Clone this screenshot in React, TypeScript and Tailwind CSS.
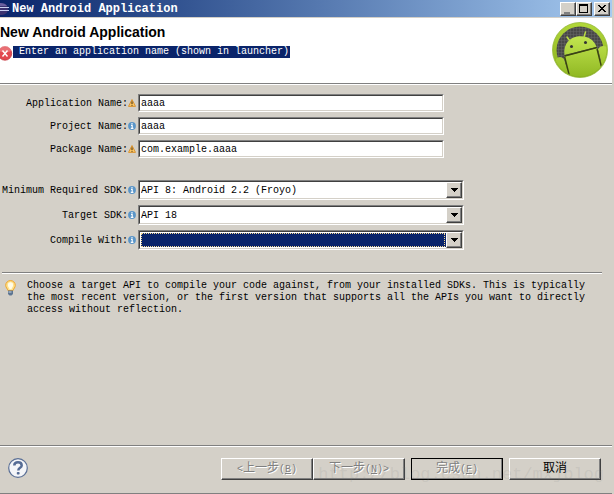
import { useState } from 'react';
import type { ReactNode } from 'react';

const sunken =
  'border border-t-[#808080] border-l-[#808080] border-b-white border-r-white';
const sunkenInner =
  'border border-t-[#404040] border-l-[#404040] border-b-[#d4d0c8] border-r-[#d4d0c8]';
const raised =
  'border border-t-white border-l-white border-b-[#404040] border-r-[#404040] shadow-[inset_-1px_-1px_0_#808080]';

function EclipseIcon() {
  return (
    <svg viewBox="0 0 9 14" className="w-[9px] h-[14px] shrink-0" aria-hidden="true">
      <path d="M0 1c5 0 8 2 8 6s-3 6-8 6z" fill="#3b3270" />
      <path d="M0 1c3 0 6 1 7 3H0z" fill="#6a5fa0" />
      <path d="M0 5.5h9M0 8.5h9" stroke="#c9cff0" />
    </svg>
  );
}

function ErrorIcon() {
  return (
    <svg viewBox="0 0 13 15" className="w-[13px] h-[15px] shrink-0" aria-hidden="true">
      <circle cx="5" cy="7.5" r="6.7" fill="#e2474f" stroke="#c33a42" strokeWidth=".8" />
      <path d="M-1 5a6 5 0 0 1 12 0q-6 3-12 0z" fill="#f08a8e" opacity=".6" />
      <path d="M2.5 4.5l5 6M7.5 4.5l-5 6" stroke="#fff" strokeWidth="1.4" />
    </svg>
  );
}

function WarningIcon() {
  return (
    <svg viewBox="0 0 8 8" className="w-2 h-2" aria-hidden="true">
      <path d="M4 .5L7.5 7.4H.5z" fill="#fbc665" stroke="#d99536" strokeWidth="1" strokeLinejoin="round" />
      <path d="M4 2.4v2.6M4 5.8v1" stroke="#3d2608" strokeWidth="1" />
    </svg>
  );
}

function InfoIcon() {
  return (
    <svg viewBox="0 0 8 8" className="w-2 h-2" aria-hidden="true">
      <circle cx="4" cy="4" r="3.9" fill="#5a95c8" />
      <path d="M4 1v1.2M3 3.4h1.2v3M2.8 6.4h2.6" stroke="#fff" strokeWidth="1.1" fill="none" />
    </svg>
  );
}

function BulbIcon() {
  return (
    <svg viewBox="0 0 11 16" className="w-[11px] h-4" aria-hidden="true">
      <path d="M5.5.6a4.7 4.7 0 0 0-4.8 4.7c0 2.2 1.7 3.2 2.2 5.2h5.2c.5-2 2.2-3 2.2-5.2A4.7 4.7 0 0 0 5.5.6z" fill="#fde08a" stroke="#f0a52c" />
      <path d="M5.5 2.2a2.8 2.8 0 0 0-2.6 3c0 1.5 1.2 2.3 1.6 4h2c.4-1.7 1.6-2.5 1.6-4a2.8 2.8 0 0 0-2.600-3z" fill="#fffbe6" />
      <path d="M3 10.5h5V14l-1.5 1.500h-2L3 14z" fill="#5d7591" />
      <path d="M3.500 12h3" stroke="#c9d6e2" />
    </svg>
  );
}

function HelpIcon() {
  return (
    <svg viewBox="0 0 20 20" className="w-5 h-5" aria-hidden="true">
      <circle cx="10" cy="10" r="9.3" fill="#f4f5f8" stroke="#5a6f96" strokeWidth="1.2" />
      <path d="M6.300 7.600C6.300 5.400 7.900 4.300 10 4.300s3.700 1.200 3.700 3.100c0 2.500-3.400 2.400-3.400 5" fill="none" stroke="#566c95" strokeWidth="2.500" />
      <rect x="8.800" y="14" width="2.800" height="2.600" rx=".8" fill="#566c95" />
    </svg>
  );
}

function AndroidLogo() {
  return (
    <svg viewBox="0 0 56 56" className="w-14 h-14" aria-hidden="true">
      <defs>
        <linearGradient id="ring" x1="0" y1="0" x2="0" y2="1">
          <stop offset="0" stopColor="#b2d83a" />
          <stop offset="1" stopColor="#86ac1c" />
        </linearGradient>
        <linearGradient id="body" gradientUnits="userSpaceOnUse" x1="0" y1="14" x2="0" y2="56">
          <stop offset="0" stopColor="#c3e650" />
          <stop offset="1" stopColor="#8fb722" />
        </linearGradient>
        <pattern id="mesh" width="3" height="3" patternUnits="userSpaceOnUse">
          <rect width="3" height="3" fill="#484848" />
          <path d="M0 0h3M0 0v3" stroke="#666" />
        </pattern>
        <clipPath id="disc">
          <circle cx="28" cy="28" r="26.5" />
        </clipPath>
      </defs>
      <circle cx="28" cy="28" r="27.5" fill="url(#ring)" stroke="#94b83a" strokeWidth=".8" />
      <circle cx="28" cy="28" r="23.5" fill="url(#mesh)" />
      <g clipPath="url(#disc)">
        <path d="M12.500 33C11 22 18 15.500 25 14.500c9-1.500 17 2.500 19.500 10.500z" fill="url(#body)" />
        <path d="M12.500 34.500L45 26l8 30H17z" fill="url(#body)" />
        <path d="M4 37q4-4 8 0l6 20H4zM46 27q3-5 9-2v26l-4-4z" fill="url(#body)" />
        <path d="M12.500 34L45 25.500M12.700 35l4.500 18M45 27l4.500 18" fill="none" stroke="#3a4410" strokeWidth="1.400" />
        <path d="M18 19l-3-4M32 15l1.500-5" stroke="#b9dc43" strokeWidth="1.500" strokeLinecap="round" />
        <circle cx="19.500" cy="24.500" r="1.500" fill="#333" />
        <circle cx="33.500" cy="20.500" r="1.500" fill="#333" />
      </g>
    </svg>
  );
}

function CaptionButton({ label, children }: { label: string; children: ReactNode }) {
  return (
    <button type="button" aria-label={label} className={`w-4 h-[14px] bg-[#d4d0c8] ${raised}`}>
      <svg viewBox="0 0 14 12" className="w-full h-full" shapeRendering="crispEdges">
        {children}
      </svg>
    </button>
  );
}

function Label({ id, icon, children }: { id: string; icon: 'warning' | 'info'; children: ReactNode }) {
  return (
    <div className="w-[138px] shrink-0 flex justify-end items-center pr-[2px]">
      <label htmlFor={id} className="whitespace-nowrap pt-px">
        {children}
      </label>
      {icon === 'warning' ? <WarningIcon /> : <InfoIcon />}
    </div>
  );
}

type FieldProps = {
  id: string;
  label: string;
  icon: 'warning' | 'info';
  value: string;
};

function TextField({ id, label, icon, value }: FieldProps) {
  const [text, setText] = useState(value);
  return (
    <div className="flex">
      <Label id={id} icon={icon}>{label}</Label>
      <div className={`w-1/2 ${sunken}`}>
        <input
          id={id}
          value={text}
          onChange={(e) => setText(e.target.value)}
          className={`block w-full h-4 px-px pt-px bg-white outline-none ${sunkenInner}`}
        />
      </div>
    </div>
  );
}

function SelectField({ id, label, icon, value, focused }: FieldProps & { focused?: boolean }) {
  return (
    <div className="flex">
      <Label id={id} icon={icon}>{label}</Label>
      <div className={`relative w-8/15 ${sunken}`}>
        <div className={`bg-white ${sunkenInner}`}>
          <select
            id={id}
            defaultValue={value}
            className={
              focused
                ? 'block w-full h-4 appearance-none outline-none bg-[#0a246a] border border-white text-white'
                : 'block w-full h-4 appearance-none outline-none bg-white px-px pt-px'
            }
          >
            <option value={value}>{value}</option>
          </select>
          {focused && (
            <span className="absolute inset-y-[2px] left-[2px] right-[18px] border border-dotted border-[#f5db95] pointer-events-none" />
          )}
        </div>
        <span className={`absolute top-px right-px w-4 h-4 bg-[#d4d0c8] flex items-center justify-center pointer-events-none ${raised}`}>
          <svg viewBox="0 0 7 4" className="w-[7px] h-1" shapeRendering="crispEdges" aria-hidden="true">
            <path d="M0 0h7L3.500 4z" fill="#000" />
          </svg>
        </span>
      </div>
    </div>
  );
}

function Separator() {
  return <div className="h-[2px] border-t border-t-[#808080] bg-white" />;
}

function WizardButton({ disabled, primary, children }: { disabled?: boolean; primary?: boolean; children: ReactNode }) {
  return (
    <button
      type="button"
      disabled={disabled}
      className={`w-[92px] h-[22px] text-[12px] leading-4 whitespace-nowrap ${raised} ${
        primary ? 'outline outline-black -outline-offset-1' : ''
      } ${disabled ? 'text-[#808080] [text-shadow:1px_1px_0_#fff]' : 'text-black'}`}
    >
      {children}
    </button>
  );
}

function Key({ letter }: { letter: string }) {
  return (
    <span className="text-[10px]">
      (<u>{letter}</u>)
    </span>
  );
}

export default function App() {
  return (
    <div className="min-h-screen flex flex-col bg-[#d4d0c8] pr-[2px] text-[10px] leading-3 text-black font-['Liberation_Mono','Noto_Sans_CJK_SC',monospace]">
      <header className="h-[17px] flex items-center bg-linear-to-r from-[#0a246a] to-[#a6caf0] text-white">
        <EclipseIcon />
        <span className="pl-[3px] text-[12px] font-bold">New Android Application</span>
        <div className="ml-auto flex pr-[2px]">
          <CaptionButton label="Minimize">
            <path d="M3 9h6v2H3z" fill="#808080" />
          </CaptionButton>
          <CaptionButton label="Maximize">
            <path d="M2 1h9v9H2zM3 3v6h7V3z" fill="#000" fillRule="evenodd" />
          </CaptionButton>
          <div className="pl-[2px] flex">
            <CaptionButton label="Close">
              <path d="M3 2l7 7M4 2l7 7M10 2L3 9M11 2L4 9" stroke="#000" />
            </CaptionButton>
          </div>
        </div>
      </header>

      <section className="h-[65px] mt-px bg-white flex justify-between">
        <div className="pt-[6px]">
          <h1 className="text-[14px] leading-4 font-bold font-['Liberation_Sans',sans-serif]">
            New Android Application
          </h1>
          <p className="flex items-start mt-[6px]">
            <ErrorIcon />
            <span className="bg-[#0a246a] text-white pl-[6px] pr-px">
              Enter an application name (shown in launcher)
            </span>
          </p>
        </div>
        <div className="pt-[4px] pr-[4px]">
          <AndroidLogo />
        </div>
      </section>
      <Separator />

      <main className="flex-1">
        <div className="flex flex-col gap-[5px] pt-[9px]">
          <TextField id="app" label="Application Name:" icon="warning" value="aaaa" />
          <TextField id="project" label="Project Name:" icon="info" value="aaaa" />
          <TextField id="package" label="Package Name:" icon="warning" value="com.example.aaaa" />
        </div>
        <div className="flex flex-col gap-[5px] pt-[22px]">
          <SelectField id="min" label="Minimum Required SDK:" icon="info" value="API 8: Android 2.2 (Froyo)" />
          <SelectField id="target" label="Target SDK:" icon="info" value="API 18" />
          <SelectField id="compile" label="Compile With:" icon="info" value="" focused />
        </div>
        <div className="mt-[22px] ml-[2px] mr-[10px]">
          <Separator />
        </div>
        <div className="flex gap-[11px] pt-[6px] pl-[5px] pr-[20px]">
          <div className="shrink-0">
            <BulbIcon />
          </div>
          <p>
            Choose a target API to compile your code against, from your installed SDKs. This is
            typically the most recent version, or the first version that supports all the APIs you
            want to directly access without reflection.
          </p>
        </div>
      </main>

      <Separator />
      <footer className="relative flex items-start h-[47px] pt-[11px] pl-[8px] pr-[11px] border-b border-[#808080]">
        <button type="button" aria-label="Help">
          <HelpIcon />
        </button>
        <div className="ml-auto flex gap-[6px]">
          <div className="flex">
            <WizardButton disabled>
              <span className="text-[10px]">&lt;</span>上一步<Key letter="B" />
            </WizardButton>
            <WizardButton disabled>
              下一步<Key letter="N" />
              <span className="text-[10px]">&gt;</span>
            </WizardButton>
          </div>
          <WizardButton disabled primary>
            完成<Key letter="F" />
          </WizardButton>
          <WizardButton>取消</WizardButton>
        </div>
        <span className="absolute right-[8px] bottom-[8px] text-[17px] leading-5 text-[#808080]/15 pointer-events-none">
          http://blog.csdn.net/mxjblog
        </span>
      </footer>
    </div>
  );
}
